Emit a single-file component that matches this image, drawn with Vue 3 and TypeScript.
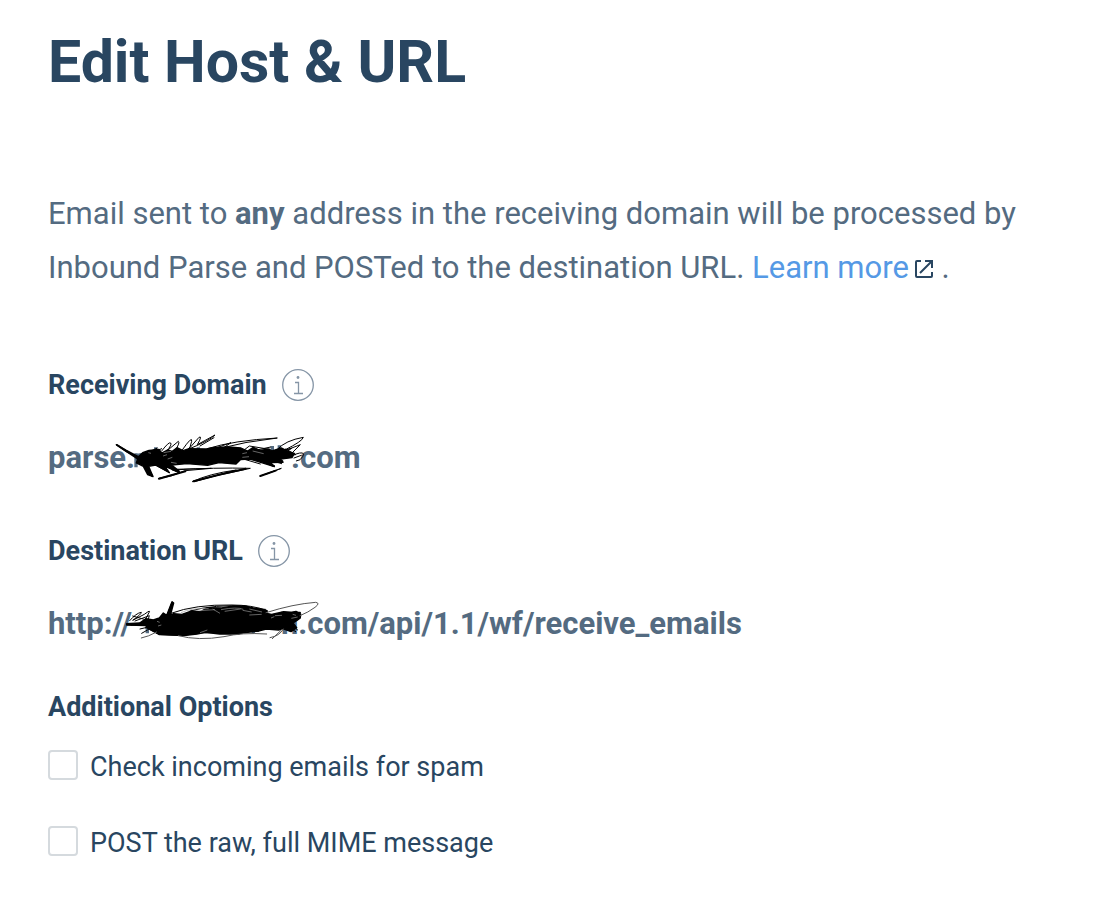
<script setup lang="ts">
import { ref } from 'vue'

const checkSpam = ref<boolean>(false)
const postRaw = ref<boolean>(false)
</script>

<template>
  <main class="page">
    <h1 class="title">Edit Host &amp; URL</h1>

    <p class="intro">
      Email sent to <strong>any</strong> address in the receiving domain will be processed by
      Inbound Parse and POSTed to the destination URL.
      <a class="link" href="#learn-more">Learn more<svg class="external" viewBox="0 0 20 20" aria-hidden="true">
        <path d="M7 2H3Q2 2 2 3V17Q2 18 3 18H17Q18 18 18 17V13M11 2H18V9M18 2L6 14" />
      </svg></a> .
    </p>

    <section class="field">
      <h2 class="label">
        Receiving Domain
        <button class="info" type="button" aria-label="About the receiving domain">
          <svg viewBox="0 0 32 32" aria-hidden="true">
            <circle cx="16" cy="16" r="15.3" />
            <path d="M13 13.5H16.5V24.5M12 24.5H21" />
            <circle class="dot" cx="16" cy="8.5" r="1.4" />
          </svg>
        </button>
      </h2>
      <p class="value">
        <span>parse.</span>
        <span class="redacted domain">
          <svg class="scribble" viewBox="48 20 576 156" aria-hidden="true">
            <path class="letter" d="M111 84V126M111 96Q118 86 132 88M170 66V80M298 66V78M520 62V78M541 60V78" />
            <path class="ink" d="M52 58L82 75L118 94L131 82L150 75L180 72L188 83L205 74L220 78L234 67L252 76L270 70L322 71L346 66L388 65L426 68L446 77L463 66L483 75L510 71L519 77L548 68L567 78L586 84L579 97L545 101L552 111L515 112L526 124L485 111L452 101L424 103L411 116L360 112L326 120L264 115L218 119L241 138L198 123L211 142L170 119L149 123L162 154L146 148L133 123L112 113L117 97L83 79Z" />
            <path class="thick" d="M54 59L140 116L160 152M120 98L160 152M180 112L238 140M460 90L524 122M470 98L550 108M460 80L570 92M180 160L259 138M284 168L360 148L440 130M484 152L530 136" />
            <path class="thin" d="M130 90L175 68L145 90L188 70M188 77Q210 48 215 53T202 78L238 48Q244 51 229 75M249 75Q281 29 278 48T265 76L300 36Q311 30 295 58L348 29Q334 45 258 76M303 62L345 37M325 70Q404 45 535 38Q440 48 350 72M340 72L396 52L366 73M438 72L451 62L506 71M455 78L515 65M535 72Q560 45 613 36Q610 48 557 74L578 69L550 87M520 91L604 58L564 98M560 71L590 88L565 91M588 87Q622 75 611 94Q605 106 592 107M585 98L607 90M117 109L146 126M132 88L202 113M155 112L212 142M433 101L484 116M450 94L527 122M466 90L548 115M178 160Q216 155 259 136L337 129Q230 132 220 132L241 143L180 159M220 134Q350 126 454 129L342 153L280 169Q330 145 412 134L286 169M483 152L547 129L500 147" />
            <path class="white" d="M194 82L216 78M192 92L204 88M430 85L444 82M430 96L450 94M461 77L494 85M206 101L220 96M216 111L233 114M148 82L156 84" />
          </svg>
        </span>
        <span>.com</span>
      </p>
    </section>

    <section class="field">
      <h2 class="label">
        Destination URL
        <button class="info" type="button" aria-label="About the destination URL">
          <svg viewBox="0 0 32 32" aria-hidden="true">
            <circle cx="16" cy="16" r="15.3" />
            <path d="M13 13.5H16.5V24.5M12 24.5H21" />
            <circle class="dot" cx="16" cy="8.5" r="1.4" />
          </svg>
        </button>
      </h2>
      <p class="value">
        <span>http://</span>
        <span class="redacted address">
          <svg class="scribble" viewBox="78 30 582 120" aria-hidden="true">
            <path class="letter" d="M142 114V130M460 105V130" />
            <path class="ink" d="M80 101L119 99L138 86L160 90L178 84L190 69L200 76L216 35L221 39L211 77L221 71L246 73L275 63L302 65L323 53L365 54L400 48L434 48L460 54L485 58L502 63L499 70L515 73L551 65L574 67L588 64L602 72L601 84L590 92L579 99L590 113L573 125L548 116L536 120L499 117L475 123L440 123L415 132L359 132L316 127L291 132L251 137L178 134L151 119L138 107L80 105Z" />
            <path class="thick" d="M82 103L150 103M217 38L203 76L180 90M140 112L180 132L250 134L316 126L415 130L475 122M545 68L600 68" />
            <path class="thin" d="M89 92Q109 69 124 67Q124 73 98 91L133 73Q154 57 147 68L127 105M98 78Q132 86 160 99M105 93L148 77L137 114M93 106L145 96M120 117L158 108M125 130L151 115M213 70Q285 43 396 45Q455 45 500 61M270 63Q345 42 440 49M355 64Q400 49 496 58M580 110L593 120M575 117L587 125" />
            <path class="loop" d="M498 68Q580 42 647 37Q662 39 645 52Q625 67 600 77M235 137Q295 153 372 140Q425 127 500 132M124 144Q145 140 170 126M510 143Q539 138 550 117M517 146L543 121" />
            <path class="white" d="M243 68Q275 53 326 56M298 62L345 59M338 57L360 70M363 59Q410 50 430 58M374 64L422 57M428 61L455 66M448 57L486 66M448 75L485 73M525 77L546 76M513 84L523 80M578 73L588 76M574 85L593 81M171 94L179 97M174 108L184 105M300 128L322 120" />
          </svg>
        </span>
        <span>n.com/api/1.1/wf/receive_emails</span>
      </p>
    </section>

    <fieldset class="options">
      <legend class="label">Additional Options</legend>
      <label class="option">
        <input v-model="checkSpam" class="box" type="checkbox" />
        <span class="caption">Check incoming emails for spam</span>
      </label>
      <label class="option">
        <input v-model="postRaw" class="box" type="checkbox" />
        <span class="caption">POST the raw, full MIME message</span>
      </label>
    </fieldset>
  </main>
</template>

<style>
body {
  margin: 0;
  background: #fff;
}
</style>

<style scoped>
.page {
  padding: 24px 48px 32px;
  color: #294661;
  font-family: Roboto, "Liberation Sans", sans-serif;
}

.title {
  margin: 0;
  font-size: 59px;
  line-height: 76px;
  font-weight: 700;
}

.intro {
  margin: 87px 0 0;
  color: #546b81;
  font-size: 31px;
  line-height: 54px;
}

.link {
  color: #5599e5;
  text-decoration: none;
}

.external {
  width: 20px;
  height: 20px;
  margin-left: 5px;
  vertical-align: -1px;
  fill: none;
  stroke: #294661;
  stroke-width: 2;
}

.field {
  margin-top: 70px;
}

.field + .field {
  margin-top: 53px;
}

.label {
  display: flex;
  align-items: center;
  gap: 15px;
  margin: 0;
  padding: 0;
  font-size: 27px;
  line-height: 40px;
  font-weight: 700;
}

.info {
  width: 32px;
  height: 32px;
  padding: 0;
  border: 0;
  background: none;
  cursor: pointer;
}

.info svg {
  display: block;
  width: 32px;
  height: 32px;
  fill: none;
  stroke: #8595a6;
  stroke-width: 1.3;
}

.info .dot {
  fill: #8595a6;
  stroke: none;
}

.value {
  display: flex;
  margin: 33px 0 0;
  color: #546b81;
  font-size: 31px;
  line-height: 40px;
  font-weight: 700;
}

.redacted {
  position: relative;
  flex: none;
}

.domain {
  width: 156px;
}

.address {
  width: 149px;
}

.scribble {
  position: absolute;
}

.domain .scribble {
  top: -6px;
  right: -16px;
  width: 192px;
  height: 52px;
}

.address .scribble {
  top: -4px;
  right: -39px;
  width: 194px;
  height: 40px;
}

.letter {
  fill: none;
  stroke: #546b81;
  stroke-width: 10;
}

.ink {
  fill: #000;
  stroke: #000;
  stroke-width: 4;
  stroke-linejoin: round;
}

.thick {
  fill: none;
  stroke: #000;
  stroke-width: 6;
  stroke-linecap: round;
}

.thin {
  fill: none;
  stroke: #000;
  stroke-width: 3;
  stroke-linecap: round;
}

.loop {
  fill: none;
  stroke: #555;
  stroke-width: 3;
  stroke-linecap: round;
}

.white {
  fill: none;
  stroke: #999;
  stroke-width: 2;
}

.options {
  margin: 43px 0 0;
  padding: 0;
  border: 0;
}

.option {
  display: flex;
  align-items: center;
  gap: 12px;
  margin-top: 32px;
  font-size: 27px;
  line-height: 40px;
}

.label + .option {
  margin-top: 16px;
}

.caption {
  padding-top: 4px;
}

.box {
  flex: none;
  appearance: none;
  width: 30px;
  height: 30px;
  margin: 0;
  border: 2px solid #d5dade;
  border-radius: 4px;
  background: #fff;
}

.box:checked {
  border-color: #5599e5;
  background: #5599e5;
}
</style>
